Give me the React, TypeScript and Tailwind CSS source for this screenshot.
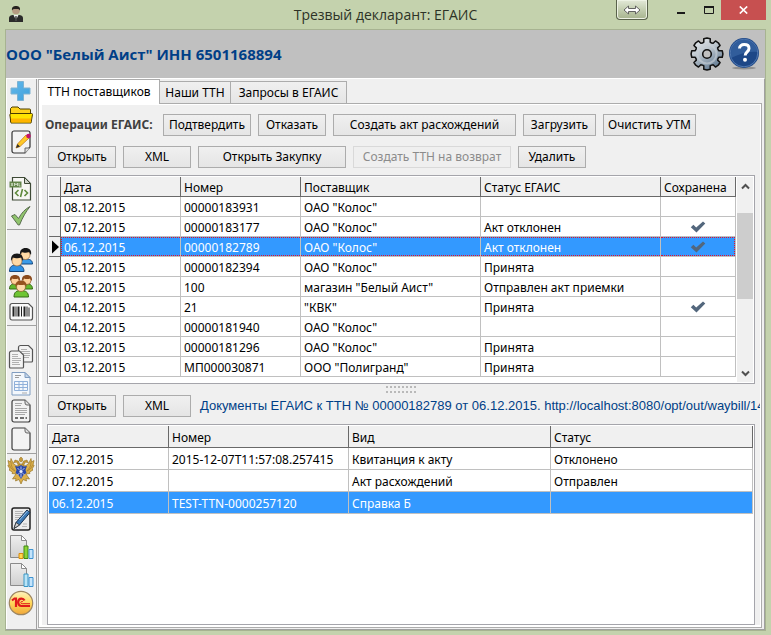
import { useState, type ReactNode } from 'react'
import clsx from 'clsx'

interface Waybill {
  date: string
  number: string
  supplier: string
  status: string
  saved: boolean
}

interface EgaisDoc {
  date: string
  number: string
  kind: string
  status: string
}

const waybills: Waybill[] = [
  { date: '08.12.2015', number: '00000183931', supplier: 'ОАО "Колос"', status: '', saved: false },
  { date: '07.12.2015', number: '00000183177', supplier: 'ОАО "Колос"', status: 'Акт отклонен', saved: true },
  { date: '06.12.2015', number: '00000182789', supplier: 'ОАО "Колос"', status: 'Акт отклонен', saved: true },
  { date: '05.12.2015', number: '00000182394', supplier: 'ОАО "Колос"', status: 'Принята', saved: false },
  { date: '05.12.2015', number: '100', supplier: 'магазин "Белый Аист"', status: 'Отправлен акт приемки', saved: false },
  { date: '04.12.2015', number: '21', supplier: '"КВК"', status: 'Принята', saved: true },
  { date: '04.12.2015', number: '00000181940', supplier: 'ОАО "Колос"', status: '', saved: false },
  { date: '03.12.2015', number: '00000181296', supplier: 'ОАО "Колос"', status: 'Принята', saved: false },
  { date: '03.12.2015', number: 'МП000030871', supplier: 'ООО "Полигранд"', status: 'Принята', saved: false },
]

const docs: EgaisDoc[] = [
  { date: '07.12.2015', number: '2015-12-07T11:57:08.257415', kind: 'Квитанция к акту', status: 'Отклонено' },
  { date: '07.12.2015', number: '', kind: 'Акт расхождений', status: 'Отправлен' },
  { date: '06.12.2015', number: 'TEST-TTN-0000257120', kind: 'Справка Б', status: '' },
]

const tabs = [
  { name: 'ТТН поставщиков', width: 'w-[122px]' },
  { name: 'Наши ТТН', width: 'w-[71px]' },
  { name: 'Запросы в ЕГАИС', width: 'w-[116px]' },
]

/* ---------- icons ---------- */

function Svg({ w = 24, h = 24, children }: { w?: number; h?: number; children: ReactNode }) {
  return (
    <svg width={w} height={h} viewBox={`0 0 ${w} ${h}`} fill="none" aria-hidden="true" className="shrink-0">
      {children}
    </svg>
  )
}

function PersonIcon() {
  return (
    <Svg w={16} h={18}>
      <path d="M1 17v-4c0-2 2-3 4-3h6c2 0 4 1 4 3v4z" fill="#2b2b2b" />
      <path d="M5.5 10 8 15l2.500-5z" fill="#f2f2f2" />
      <path d="M7.400 11h1.200l.6 5h-2.400z" fill="#444" />
      <circle cx="8" cy="5.500" r="3.800" fill="#b59a82" />
      <path d="M4 5.500C3.500 2 5.500 1 8 1s4.500 1 4 4.500C11 3.500 9 4 8 4s-3-.5-4 1.500z" fill="#26221f" />
    </Svg>
  )
}

// outline of a cog with eight teeth around (17, 17)
const gearPath = (() => {
  const at = (r: number, deg: number) => {
    const a = ((deg - 90) * Math.PI) / 180
    return `${(17 + r * Math.cos(a)).toFixed(2)} ${(17 + r * Math.sin(a)).toFixed(2)}`
  }
  let d = ''
  for (let i = 0; i < 8; i++) {
    const a = i * 45
    d += `${i ? 'L' : 'M'}${at(12.3, a - 15)}L${at(15.6, a - 12)}L${at(15.9, a)}L${at(15.6, a + 12)}L${at(12.3, a + 15)}Q${at(11.6, a + 22.5)} ${at(12.3, a + 30)}`
  }
  return d + 'Z'
})()

function GearIcon() {
  return (
    <Svg w={34} h={34}>
      <defs>
        <linearGradient id="gear" x1="0" y1="0" x2="0.6" y2="1">
          <stop offset="0" stopColor="#eef0f2" />
          <stop offset="0.5" stopColor="#bcc5cd" />
          <stop offset="1" stopColor="#657d94" />
        </linearGradient>
      </defs>
      <path d={gearPath} fill="url(#gear)" stroke="#111" strokeWidth="1.500" strokeLinejoin="round" />
      <circle cx="17" cy="17" r="9.500" stroke="#c9d0d7" strokeWidth="2" opacity="0.600" />
      <circle cx="17" cy="17" r="4.300" fill="#c0c0c0" stroke="#111" strokeWidth="1.600" />
    </Svg>
  )
}

function HelpIcon() {
  return (
    <Svg w={32} h={34}>
      <ellipse cx="16" cy="31" rx="12" ry="1.500" fill="#8f8f8f" />
      <circle cx="16" cy="16" r="15" fill="#1d4787" />
      <circle cx="16" cy="16" r="13.800" stroke="#5f87bd" strokeWidth="0.800" />
      <path d="M3 16a13 13 0 0 1 26-1C20 14 12 17 3 21z" fill="#3a66a4" opacity="0.700" />
      <path d="M11.500 11.500c0-2.500 2-3.900 4.700-3.900 2.900 0 4.800 1.500 4.800 3.900 0 3.300-3.800 3.500-3.800 7" stroke="#fff" strokeWidth="3" />
      <circle cx="17" cy="22.800" r="2" fill="#fff" />
    </Svg>
  )
}

function PlusIcon() {
  return (
    <Svg w={22} h={22}>
      <defs>
        <linearGradient id="plus" x1="0" y1="0" x2="1" y2="1">
          <stop offset="0" stopColor="#62b8ea" />
          <stop offset="1" stopColor="#3fa0dc" />
        </linearGradient>
      </defs>
      <path d="M7.500 1.500h6V8H20v6h-6.500v6.500h-6V14H1V8h6.500z" fill="url(#plus)" stroke="#7cb2d2" />
    </Svg>
  )
}

function FolderIcon() {
  return (
    <Svg w={24} h={20}>
      <path d="M1.500 17V3.500L3 2h6l2 2h9.500q1 0 1 1v4" fill="#ffd21a" stroke="#4a3c00" />
      <path d="M2 8.500h20.500a1 1 0 0 1 1 1L22 18H2L.8 9.500z" fill="#ffe400" stroke="#4a3c00" />
      <path d="M1.800 13.500h20.500l-.6 4H2.400z" fill="#ffb400" />
    </Svg>
  )
}

function EditIcon() {
  return (
    <Svg w={22} h={26}>
      <path d="M2 4a2 2 0 0 1 2-2h14a2 2 0 0 1 2 2v14l-5 6H4a2 2 0 0 1-2-2z" fill="#f3f3f3" stroke="#333" strokeWidth="1.200" />
      <path d="M15 24v-5h5" fill="#ddd" stroke="#666" />
      <path d="m6 19 1.500-4L16 6l3 3L10 17.500z" fill="#ffc928" stroke="#c87d14" strokeWidth="0.800" />
      <path d="m6 19 1.500-4 2.500 2.500z" fill="#333" />
      <circle cx="18.500" cy="7" r="2.300" fill="#c3126b" />
    </Svg>
  )
}

function XmlIcon() {
  return (
    <Svg w={24} h={26}>
      <path d="M3.500 1.500h12l6 6V24h-18z" fill="#f7f7f4" stroke="#3e4a36" strokeWidth="1.200" />
      <path d="M15.500 1.500v6h6z" fill="#cfd4ca" stroke="#3e4a36" />
      <path d="M.5 5.500h12v6H.5z" fill="#63854a" />
      <path d="m2 7 2 3M4 7l-2 3M5.500 10V7L7 9l1.500-2v3M10 7v3h1.500" stroke="#dfe9d7" strokeWidth="0.800" />
      <path d="m9.500 14-3 3 3 3M15.500 14l3 3-3 3M13.500 13l-2 8" stroke="#5f8a3c" strokeWidth="1.600" />
    </Svg>
  )
}

function GreenCheckIcon() {
  return (
    <Svg w={22} h={22}>
      <path d="m1.500 11 3.500-1.500 3.500 4c3-5.500 6.500-9.500 11.500-12C16 6.500 12.500 12.500 9.500 20H8.200z" fill="#8fc46c" stroke="#5b6e50" strokeLinejoin="round" />
    </Svg>
  )
}

function TwoPeopleIcon() {
  return (
    <Svg w={26} h={26}>
      <path d="M11.500 17c0-4 2-5 6-5s7 1 7 5z" fill="#3b9ae8" stroke="#14477d" />
      <circle cx="17.500" cy="8" r="4.500" fill="#ffd9a5" stroke="#a06a34" strokeWidth="0.700" />
      <path d="M12 8c-.5-5 2-7 5.500-7 4 0 6.500 2.500 5.500 7l-2-3c-3 1.500-6 .5-7 0z" fill="#171717" />
      <path d="M1.500 24.500c0-5 2.500-6.500 7-6.500s7.500 1.500 7.500 6.500z" fill="#2f90e4" stroke="#14477d" />
      <circle cx="9" cy="14" r="5" fill="#ffd9a5" stroke="#a06a34" strokeWidth="0.700" />
      <path d="M3 14c-.5-5 2-7.500 6-7.500s6.500 2.500 6 7.500l-2-3.500c-3 1.500-6.500.5-8 0z" fill="#171717" />
    </Svg>
  )
}

function GroupIcon() {
  return (
    <Svg w={26} h={24}>
      <path d="M1.500 15c0-4 2-5 5.500-5s5 1 5 5zM14 15c0-4 2-5 5-5s5.500 1 5.500 5z" fill="#63b82d" stroke="#356a15" />
      <circle cx="7" cy="6.500" r="4" fill="#ffd09a" stroke="#8a5425" strokeWidth="0.700" />
      <circle cx="19" cy="6.500" r="4" fill="#ffd09a" stroke="#8a5425" strokeWidth="0.700" />
      <path d="M2 7C1.500 3 3.500 1 7 1s5.500 2 5 6l-2-2.500c-2 1-4.500.5-6 0zM14 7c-.5-4 1.500-6 5-6s5.500 2 5 6l-2-2.500c-2 1-4.500.5-6 0z" fill="#8a4a1c" />
      <path d="M6 23c0-5 2.500-6.500 7-6.500s7.500 1.500 7.500 6.500z" fill="#6fc534" stroke="#356a15" />
      <circle cx="13" cy="13" r="4.500" fill="#ffd9a8" stroke="#8a5425" strokeWidth="0.700" />
      <path d="M7.500 13c-.5-4 1.500-6.500 5.500-6.500s6 2.500 5.500 6.500l-2-2.500c-2 1-5 .5-7 0z" fill="#97521f" />
    </Svg>
  )
}

function BarcodeIcon() {
  return (
    <Svg w={26} h={20}>
      <path d="M4 1.500h16.500l4 4V16a2 2 0 0 1-2 2H4a2 2 0 0 1-2-2V3.500a2 2 0 0 1 2-2z" fill="#fafafa" stroke="#555" strokeWidth="1.200" />
      <path d="M5.500 4.500v10M10.500 4.500v10M16.500 4.500v10" stroke="#222" strokeWidth="2" />
      <path d="M8 4.500v10M13.500 4.500v10M19 4.500v10M21 5.500v9" stroke="#222" />
    </Svg>
  )
}

function CopyIcon() {
  return (
    <Svg w={26} h={26}>
      <path d="M10.500 3.500a2 2 0 0 1 2-2h8l4 4V17a1 1 0 0 1-1 1h-12a1 1 0 0 1-1-1z" fill="#f3f3f3" stroke="#555" strokeWidth="1.200" />
      <path d="M13 5.500h6M13 7.500h9M13 9.500h9M13 11.500h9M13 13.500h8" stroke="#b0b0b0" />
      <path d="M1.500 9a2 2 0 0 1 2-2h8l4 4v12a1 1 0 0 1-1 1h-12a1 1 0 0 1-1-1z" fill="#f3f3f3" stroke="#555" strokeWidth="1.200" />
      <path d="M4 10.500h6M4 12.500h6M4 14.500h9M4 16.500h9M4 18.500h7M4 20.500h8" stroke="#b0b0b0" />
    </Svg>
  )
}

function SheetIcon() {
  return (
    <Svg w={22} h={26}>
      <path d="M2 1.500h13l5 5V24H2z" fill="#f3f7fc" stroke="#7f9cc0" />
      <path d="M15 1.500v5h5z" fill="#c6d7ea" stroke="#7f9cc0" />
      <path d="M5 4.500h6M5 6.500h4" stroke="#9a9a9a" />
      <path d="M4.500 10.500h13v9h-13zM4.500 13.500h13M4.500 16.500h13M9 10.500v9M13 10.500v9" stroke="#8fb0da" />
      <path d="M12 22h5" stroke="#aaa" />
    </Svg>
  )
}

function PageIcon({ lines }: { lines?: boolean }) {
  return (
    <Svg w={22} h={26}>
      <path d="M2 4a2 2 0 0 1 2-2h11l5 5v15a2 2 0 0 1-2 2H4a2 2 0 0 1-2-2z" fill="#f3f3f3" stroke="#3d3d3d" strokeWidth="1.200" />
      <path d="M15 2v3q0 2 2 2h3" fill="#ddd" stroke="#666" />
      {lines && (
        <>
          <path d="M5 5.500h7M5 7.500h6M5 10.500h12M5 12.500h12M5 14.500h12M5 16.500h10" stroke="#a8a8a8" />
          <path d="M5 20h3M10 20h4M15.500 20h1.500" stroke="#444" strokeWidth="1.300" />
        </>
      )}
    </Svg>
  )
}

function EmblemIcon() {
  return (
    <Svg w={28} h={30}>
      <path
        d="M13 8 10 10 6.500 8 4 2.500 3.500 6 1 4.500 2 9 .8 9.500 3 13l-1 1 3.500 2-.5 1.500L9 18l-3.500 5 3.500-.5L8.500 25l3.500-1.500L14 28l2-4.500 3.500 1.500-.5-2.500 3.500.5L19 18l4-.5-.5-1.500 3.500-2-1-1 2.200-3.500L26 9l1-4.500L24.500 6 24 2.500 21.500 8 18 10l-3-2z"
        fill="#dcb04a"
        stroke="#9a7524"
        strokeWidth="0.700"
      />
      <path d="M4 6c0 4 1.500 7 4.500 9M2.500 9c1 3 3 5 5.500 6M24 6c0 4-1.500 7-4.500 9M25.500 9c-1 3-3 5-5.500 6" stroke="#a37c2c" strokeWidth="0.700" />
      <path d="M12.500 5V2.500L14 1l1.500 1.500V5L14 6zM11.500 9.500 9.500 6l-3 1 1.500-3 3.500 1 1.500 3.500zM16.500 9.500l2-3.500 3 1L20 4l-3.500 1L15 8.500z" fill="#c79a38" stroke="#8d6a20" strokeWidth="0.500" />
      <path d="m14 9 3 1.500 3-.5-1.500 4 1 3-3 2L14 23l-2.500-4-3-2 1-3L8 10l3 .5z" fill="#2b48a8" />
      <path d="m10.500 12 7 7M17.500 12l-7 7M14 10.500v11" stroke="#c4cff0" strokeWidth="0.900" />
      <circle cx="14" cy="15.500" r="2" fill="#e8ecf8" stroke="#2b48a8" strokeWidth="0.700" />
    </Svg>
  )
}

function NotepadIcon() {
  return (
    <Svg w={22} h={26}>
      <path d="M2 4a2 2 0 0 1 2-2h14a2 2 0 0 1 2 2v18a2 2 0 0 1-2 2H4a2 2 0 0 1-2-2z" fill="#ececec" stroke="#222" strokeWidth="1.500" />
      <path d="M5 5.500h8M5 7.500h8M5 9.500h6M5 11.500h5M5 13.500h3M13 18h4M12 20.500h5" stroke="#b5b5b5" />
      <path d="m4 22.500 2-6L17 4l3 2.500L9.500 19z" fill="#3c78b4" stroke="#16304f" />
      <path d="m4 22.500 2-6L9.500 19z" fill="#d5d5d5" stroke="#222" strokeWidth="0.700" />
      <path d="m9.500 14 8-9" stroke="#9cc4ea" />
    </Svg>
  )
}

function ChartIcon({ color }: { color?: boolean }) {
  return (
    <Svg w={26} h={26}>
      <defs>
        <linearGradient id="page" x1="0" y1="0" x2="0" y2="1">
          <stop offset="0" stopColor="#efefef" />
          <stop offset="1" stopColor="#cfcfcf" />
        </linearGradient>
      </defs>
      <path d="M2.500 1.500h11l5 5V23.500h-16z" fill="url(#page)" stroke="#8b8b8b" />
      <path d="M13.500 1.500v5h5z" fill="#fff" stroke="#8b8b8b" />
      {color && <path d="M11 19.500h4v5h-4z" fill="#ffd94d" stroke="#d98a12" />}
      <path d="M16 12h4v12.500h-4z" fill={color ? '#8bd336' : '#b9e4f7'} stroke={color ? '#3f8a12' : '#3a96c4'} />
      <path d="M21 15.500h4v9h-4z" fill="#c4e4fb" stroke="#3f94d2" />
    </Svg>
  )
}

function OneCIcon() {
  return (
    <Svg w={26} h={26}>
      <defs>
        <linearGradient id="onec" x1="0" y1="0" x2="0" y2="1">
          <stop offset="0" stopColor="#fff3c0" />
          <stop offset="0.500" stopColor="#ffd75a" />
          <stop offset="1" stopColor="#f0a63a" />
        </linearGradient>
      </defs>
      <circle cx="13" cy="13" r="11.700" fill="url(#onec)" stroke="#9c8560" strokeWidth="1.200" />
      <path d="m4 10.500 2.500-2H8V17M16.500 10.500c-.6-1.300-1.700-1.900-3-1.900-2 0-3.300 1.600-3.300 3.700s1.300 3.700 3.300 3.700h8.500" stroke="#e01b1b" strokeWidth="2.200" />
      <path d="M15 11.800c-.9-.8-2.200-.3-2.200.7 0 .8.600 1.200 1.400 1.200h7.800" stroke="#e01b1b" />
    </Svg>
  )
}

function SavedIcon() {
  return (
    <svg width="16" height="12" viewBox="0 0 16 12" role="img" aria-label="Сохранена" className="mx-auto">
      <path d="m.8 6.200 2.600-2.400 2.800 2.600L13 .6l2.300 2L6.500 11.400z" fill="#53677d" />
    </svg>
  )
}

/* ---------- controls ---------- */

function Button({ className, disabled, children }: { className: string; disabled?: boolean; children: ReactNode }) {
  return (
    <button
      type="button"
      disabled={disabled}
      className={clsx(
        'h-[22px] shrink-0 border text-center leading-5 whitespace-nowrap',
        disabled ? 'border-[#d9d9d9] bg-[#efefef] text-[#8b8b8b]' : 'border-[#acacac] bg-linear-to-b from-[#f0f0f0] to-[#e5e5e5] text-black',
        className,
      )}
    >
      {children}
    </button>
  )
}

function Tool({ label, className, children }: { label: string; className: string; children: ReactNode }) {
  return (
    <button type="button" aria-label={label} className={clsx('flex w-full items-center justify-center pr-px', className)}>
      {children}
    </button>
  )
}

function HeadCell({ children }: { children?: ReactNode }) {
  return (
    <th
      scope="col"
      className="overflow-hidden border-r border-b border-[#696969] bg-[#f0f0f0] px-[3px] pt-[2px] pb-0 text-left font-normal whitespace-nowrap"
    >
      {children}
    </th>
  )
}

function Sidebar() {
  const group = 'flex flex-col border-b border-[#a0a0a0]'
  return (
    <nav className="w-[31px] shrink-0 border-r border-l border-r-[#a0a0a0] border-l-white">
      <div className={group}>
        <Tool label="Добавить" className="h-6"><PlusIcon /></Tool>
        <Tool label="Открыть папку" className="h-6"><FolderIcon /></Tool>
        <Tool label="Изменить" className="h-[30px]"><EditIcon /></Tool>
      </div>
      <div className={clsx(group, 'pt-[17px]')}>
        <Tool label="Файл XML" className="h-7"><XmlIcon /></Tool>
        <Tool label="Проверить" className="h-[26px]"><GreenCheckIcon /></Tool>
      </div>
      <div className={clsx(group, 'pt-[17px]')}>
        <Tool label="Поставщики" className="h-[26px]"><TwoPeopleIcon /></Tool>
        <Tool label="Производители" className="h-[26px]"><GroupIcon /></Tool>
        <Tool label="Продукция" className="h-[26px]"><BarcodeIcon /></Tool>
      </div>
      <div className={clsx(group, 'pt-[17px]')}>
        <Tool label="Накладные" className="h-7"><CopyIcon /></Tool>
        <Tool label="Таблица" className="h-[26px]"><SheetIcon /></Tool>
        <Tool label="Отчет" className="h-7"><PageIcon lines /></Tool>
        <Tool label="Новый документ" className="h-7"><PageIcon /></Tool>
      </div>
      <div className={group}>
        <Tool label="ЕГАИС" className="h-[33px]"><EmblemIcon /></Tool>
      </div>
      <div className="flex flex-col pt-[17px]">
        <Tool label="Журнал" className="h-7"><NotepadIcon /></Tool>
        <Tool label="Обороты" className="h-7"><ChartIcon color /></Tool>
        <Tool label="Остатки" className="h-7"><ChartIcon /></Tool>
        <Tool label="1С" className="h-7"><OneCIcon /></Tool>
      </div>
    </nav>
  )
}

function WaybillTable({ selected, onSelect }: { selected: number; onSelect: (i: number) => void }) {
  return (
    <div className="mx-[5px] mt-[7px] flex h-[209px] border border-[#a5a5ab] bg-white p-px">
      <div className="min-w-0 flex-1">
        <table className="w-full table-fixed border-separate border-spacing-0">
          <colgroup>
            <col className="w-3" />
            <col className="w-[120px]" />
            <col className="w-[120px]" />
            <col />
            <col className="w-[180px]" />
            <col className="w-[75px]" />
          </colgroup>
          <thead>
            <tr className="h-5">
              <HeadCell />
              <HeadCell>Дата</HeadCell>
              <HeadCell>Номер</HeadCell>
              <HeadCell>Поставщик</HeadCell>
              <HeadCell>Статус ЕГАИС</HeadCell>
              <HeadCell>Сохранена</HeadCell>
            </tr>
          </thead>
          <tbody>
            {waybills.map((row, i) => {
              const active = i === selected
              const cells = [row.date, row.number, row.supplier, row.status, row.saved && <SavedIcon />]
              return (
                <tr key={i} className="h-5" onClick={() => onSelect(i)}>
                  <td className="border-r border-b border-[#696969] bg-[#f0f0f0] p-0">
                    {active && (
                      <svg width="11" height="14" viewBox="0 0 11 14" className="block" aria-hidden="true">
                        <path d="M3 0.500v13L10 7z" fill="#000" />
                      </svg>
                    )}
                  </td>
                  {cells.map((cell, c) => (
                    <td key={c} className="border-r border-b border-[#c0c0c0] p-0">
                      <div
                        className={clsx(
                          'flex h-[19px] items-center overflow-hidden px-[3px] whitespace-nowrap',
                          c < 4 && 'pt-[2px]',
                          active && 'border-y border-dotted border-[#e01030] bg-[#3399ff] text-white',
                          active && c === 0 && 'border-l pl-[2px]',
                          active && c === 4 && 'border-r',
                        )}
                      >
                        {cell}
                      </div>
                    </td>
                  ))}
                </tr>
              )
            })}
          </tbody>
        </table>
      </div>
      <div className="ml-px flex w-4 flex-col bg-[#f0f0f0]">
        <button type="button" aria-label="Вверх" className="flex h-9 justify-center pt-[6px]">
          <svg width="9" height="7" viewBox="0 0 9 7" fill="none"><path d="m1 5.500 3.500-3.500L8 5.500" stroke="#505050" strokeWidth="2" /></svg>
        </button>
        <div className="h-[86px] bg-[#cdcdcd]" />
        <button type="button" aria-label="Вниз" className="mt-auto flex h-[17px] items-center justify-center">
          <svg width="9" height="7" viewBox="0 0 9 7" fill="none"><path d="m1 1.500 3.500 3.500L8 1.500" stroke="#505050" strokeWidth="2" /></svg>
        </button>
      </div>
    </div>
  )
}

function DocsTable({ selected, onSelect }: { selected: number; onSelect: (i: number) => void }) {
  return (
    <div className="mx-[5px] mt-[7px] flex-1 border border-[#a5a5ab] bg-white p-px">
      <table className="w-full table-fixed border-separate border-spacing-0">
        <colgroup>
          <col className="w-[120px]" />
          <col className="w-[180px]" />
          <col className="w-[202px]" />
          <col />
        </colgroup>
        <thead>
          <tr className="h-[22px]">
            <HeadCell>Дата</HeadCell>
            <HeadCell>Номер</HeadCell>
            <HeadCell>Вид</HeadCell>
            <HeadCell>Статус</HeadCell>
          </tr>
        </thead>
        <tbody>
          {docs.map((row, i) => (
            <tr key={i} className={clsx('h-[22px]', i === selected && 'bg-[#3399ff] text-white')} onClick={() => onSelect(i)}>
              {[row.date, row.number, row.kind, row.status].map((cell, c) => (
                <td key={c} className="overflow-hidden border-r border-b border-[#c0c0c0] px-[3px] pt-[2px] pb-0 whitespace-nowrap">
                  {cell}
                </td>
              ))}
            </tr>
          ))}
        </tbody>
      </table>
    </div>
  )
}

function TitleBar() {
  return (
    <div className="grid h-[29px] grid-cols-[1fr_auto_1fr] items-start px-[5px]">
      <div className="pt-[5px] pl-[3px]"><PersonIcon /></div>
      <h1 className="pt-[3px] font-['Open_Sans','Noto_Sans',sans-serif] text-[14px] leading-6 text-[#2d3226]">Трезвый декларант: ЕГАИС</h1>
      <div className="flex h-5 justify-end">
        <button type="button" aria-label="Переместить" className="mr-[18px] flex w-8 items-center justify-center rounded-b border border-t-0 border-[#59624b] bg-linear-to-b from-[#e3e9d8] via-[#c3ceb0] to-[#a6b38e] shadow-[inset_0_0_0_1px_#edf2e4]">
          <svg width="18" height="10" viewBox="0 0 18 10">
            <path d="M1 5 5.500 1v2.500h7V1L17 5l-4.500 4V6.500h-7V9z" fill="#fff" stroke="#555" strokeWidth="0.900" />
          </svg>
        </button>
        <button type="button" aria-label="Свернуть" className="flex w-[30px] items-center justify-center">
          <svg width="10" height="10" viewBox="0 0 10 10"><path d="M1 7h8v2H1z" fill="#1a1a1a" /></svg>
        </button>
        <button type="button" aria-label="Развернуть" className="flex w-[25px] items-center justify-center">
          <svg width="10" height="10" viewBox="0 0 10 10" fill="none"><path d="M.5 1.500h9v7h-9z" stroke="#1a1a1a" /><path d="M0 2h10" stroke="#1a1a1a" strokeWidth="2" /></svg>
        </button>
        <button type="button" aria-label="Закрыть" className="flex w-[45px] items-center justify-center bg-[#c75050]">
          <svg width="9" height="8" viewBox="0 0 9 8"><path d="m.8.5 7.400 7M8.200.5l-7.400 7" stroke="#fff" strokeWidth="1.700" /></svg>
        </button>
      </div>
    </div>
  )
}

export default function App() {
  const [tab, setTab] = useState(0)
  const [waybill, setWaybill] = useState(2)
  const [doc, setDoc] = useState(2)

  return (
    <div className="flex min-h-screen w-full flex-col bg-[#c4d2ad] pb-1 font-['Noto_Sans','Open_Sans',sans-serif] text-[12px] leading-4 text-black">
      <TitleBar />
      <div className="mx-[5px] flex flex-1 flex-col border border-[#a7b391] bg-[#f0f0f0]">
        <header className="flex h-12 items-center justify-between bg-[#c0c0c0] pr-[5px]">
          <h2 className="font-['Open_Sans','Noto_Sans',sans-serif] text-[15px] leading-5 font-bold text-[#003f87]">ООО "Белый Аист" ИНН 6501168894</h2>
          <div className="flex gap-1">
            <button type="button" aria-label="Настройки"><GearIcon /></button>
            <button type="button" aria-label="Справка"><HelpIcon /></button>
          </div>
        </header>

        <div className="flex flex-1 border-t border-r border-b border-t-white border-r-[#a0a0a0] border-b-[#a0a0a0]">
          <Sidebar />
          <main className="flex min-w-0 flex-1 flex-col pr-[2px] pb-px pl-px">
            <div role="tablist" className="flex h-6 items-end">
              {tabs.map(({ name, width }, i) => (
                <button
                  key={name}
                  type="button"
                  role="tab"
                  aria-selected={i === tab}
                  onClick={() => setTab(i)}
                  className={clsx(
                    'border border-b-0 border-[#acacac] text-center whitespace-nowrap',
                    width,
                    i === tab ? 'relative -mb-px h-[25px] bg-white pb-px' : 'h-[22px] border-l-0 bg-linear-to-b from-[#f0f0f0] to-[#e5e5e5]',
                  )}
                >
                  {name}
                </button>
              ))}
            </div>

            <div className="flex flex-1 flex-col border border-[#acacac] bg-white pt-px pr-px pb-[2px] pl-[3px]">
              <div className="flex flex-1 flex-col bg-[#f0f0f0] pt-[9px]">
                <div className="flex items-center gap-[7px] pl-[3px]">
                  <span className="w-[111px] shrink-0 font-bold whitespace-nowrap text-[#404040]">Операции ЕГАИС:</span>
                  <Button className="w-[88px]">Подтвердить</Button>
                  <Button className="w-[68px]">Отказать</Button>
                  <Button className="w-[183px]">Создать акт расхождений</Button>
                  <Button className="w-[73px]">Загрузить</Button>
                  <Button className="w-[93px]">Очистить УТМ</Button>
                </div>
                <div className="mt-[10px] flex gap-[7px] pl-[6px]">
                  <Button className="w-[68px]">Открыть</Button>
                  <Button className="w-[68px]">XML</Button>
                  <Button className="w-[148px]">Открыть Закупку</Button>
                  <Button className="w-[158px]" disabled>Создать ТТН на возврат</Button>
                  <Button className="w-[68px]">Удалить</Button>
                </div>

                <WaybillTable selected={waybill} onSelect={setWaybill} />

                <div className="flex h-[11px] items-center justify-center">
                  <svg width="30" height="7" aria-hidden="true">
                    {Array.from({ length: 8 }, (_, i) => (
                      <path key={i} d={`M${i * 4} 0h2v2h-2zM${i * 4} 5h2v2h-2z`} fill="#b9b9b9" />
                    ))}
                  </svg>
                </div>

                <div className="flex items-center gap-[7px] pl-[6px]">
                  <Button className="w-[68px]">Открыть</Button>
                  <Button className="w-[68px]">XML</Button>
                  <p className="min-w-0 flex-1 overflow-hidden pl-[2px] font-['Liberation_Sans',Arial,sans-serif] text-[13px] whitespace-nowrap text-[#003f87]">
                    Документы ЕГАИС к ТТН № 00000182789 от 06.12.2015. http://localhost:8080/opt/out/waybill/14
                  </p>
                </div>

                <DocsTable selected={doc} onSelect={setDoc} />
              </div>
            </div>
          </main>
        </div>
      </div>
    </div>
  )
}
